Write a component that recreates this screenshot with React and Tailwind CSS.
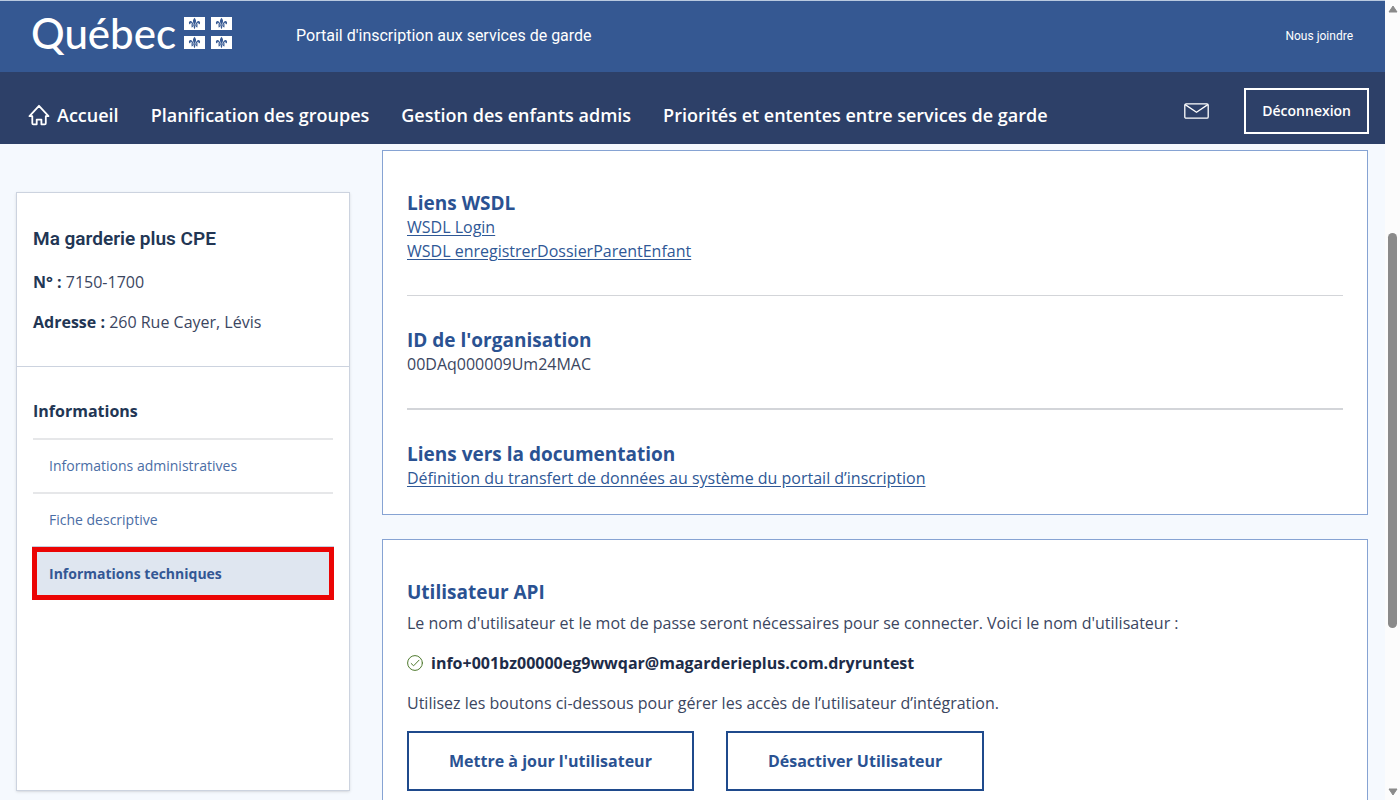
import React from "react";

function FleurDeLys() {
  return (
    <svg viewBox="0 0 21 13" className="h-[13px] w-[21px]" aria-hidden="true">
      <rect width="21" height="13" fill="#fff" />
      <g fill="#355892">
        <path d="M10.5 .8C11.6 2.2 12.2 3.2 12 4.6C11.9 5.6 11.3 6.4 11.2 7.6H9.8C9.7 6.4 9.1 5.6 9 4.6C8.8 3.2 9.4 2.2 10.5 .8Z" />
        <path d="M9.3 7.6C9 6 8.3 4 6.7 3.9C5.2 3.8 4.5 5.3 5.1 6.7C5.5 7.4 6.3 7.4 6.7 6.8C6.2 6.3 6.5 5.6 7 5.8C7.8 6.1 7.8 7 7.9 7.6Z" />
        <path d="M11.7 7.6C12 6 12.7 4 14.3 3.9C15.8 3.8 16.5 5.3 15.9 6.7C15.5 7.4 14.7 7.4 14.3 6.8C14.8 6.3 14.5 5.6 14 5.8C13.2 6.1 13.2 7 13.1 7.6Z" />
        <path d="M7.2 7.5H13.8V8.6H7.2Z" />
        <path d="M9.8 8.5H11.2C11.3 9.4 11.6 10.2 10.5 12.2C9.4 10.2 9.7 9.4 9.8 8.5Z" />
        <path d="M8.2 8.5H9.4C9.2 9.7 8.5 10.5 7.5 10.3C7 10 7.2 9.4 7.7 9.4C8 9.3 8.1 9 8.2 8.5ZM12.8 8.5H11.6C11.8 9.7 12.5 10.5 13.5 10.3C14 10 13.8 9.4 13.3 9.4C13 9.3 12.9 9 12.8 8.5Z" />
      </g>
    </svg>
  );
}

function Logo() {
  return (
    <a href="#quebec" className="flex h-14 items-start gap-2">
      <span className="font-['Lato',sans-serif] text-[42px] leading-[50px] font-medium">Québec</span>
      <span className="grid grid-cols-[21px_21px] gap-[6px] pt-[9px]">
        <FleurDeLys />
        <FleurDeLys />
        <FleurDeLys />
        <FleurDeLys />
      </span>
    </a>
  );
}

function HomeIcon() {
  return (
    <svg viewBox="0 0 22 22" className="h-[22px] w-[22px]" fill="none" stroke="currentColor" strokeWidth="1.8" strokeLinejoin="round" strokeLinecap="round" aria-hidden="true">
      <path d="M4.3 12.2H1.5L11 1.8L20.5 12.2H17.8V19.2Q17.8 20.3 16.7 20.3H13.4V15.6H8.7V20.3H5.4Q4.3 20.3 4.3 19.2Z" />
    </svg>
  );
}

function MailIcon() {
  return (
    <svg viewBox="0 0 25 16" className="h-4 w-[25px]" fill="none" stroke="currentColor" strokeWidth="1.3" strokeLinejoin="round" aria-hidden="true">
      <rect x=".8" y=".8" width="23.4" height="14.4" rx="1.3" />
      <path d="M1.2 1.6L12.5 9.3L23.8 1.6" />
    </svg>
  );
}

function CheckIcon() {
  return (
    <svg viewBox="0 0 16 16" className="h-4 w-4 text-[#4f7a2e]" fill="none" stroke="currentColor" strokeLinecap="round" strokeLinejoin="round" aria-hidden="true">
      <circle cx="8" cy="8" r="7.4" />
      <path d="M4.2 8.5L6.6 10.8L12 5.2" />
    </svg>
  );
}

const navLinks = [
  "Planification des groupes",
  "Gestion des enfants admis",
  "Priorités et ententes entre services de garde",
];

function Section({ title, children }) {
  return (
    <section>
      <h2 className="text-[19px] leading-6 font-bold text-[#2a5292]">{title}</h2>
      {children}
    </section>
  );
}

function TextLink({ children }) {
  return (
    <a href="#document" className="block text-[#2f5896] underline underline-offset-2">
      {children}
    </a>
  );
}

function ActionButton({ children }) {
  return (
    <button type="button" className="h-[60px] border-2 border-[#1f4a8c] bg-white px-10 font-bold text-[#2a5292]">
      {children}
    </button>
  );
}

function Sidebar() {
  return (
    <aside className="mt-12 mb-[9px] w-[334px] shrink-0 border border-[#ccd3df] bg-white shadow-sm">
      <div className="border-b border-[#ccd3df] px-4 pt-[31px] pb-8">
        <h2 className="font-['Roboto',sans-serif] text-[19px] leading-[30px] font-semibold">Ma garderie plus CPE</h2>
        <p className="mt-4 text-[#3b465f]">
          <b className="text-[#223654]">N° :</b> 7150-1700
        </p>
        <p className="mt-4 text-[#3b465f]">
          <b className="text-[#223654]">Adresse :</b> 260 Rue Cayer, Lévis
        </p>
      </div>
      <nav className="px-4 pt-8" aria-label="Informations">
        <h3 className="pb-[15px] font-bold">Informations</h3>
        <ul className="text-sm text-[#4a6da5]">
          <li className="border-t-2 border-[#e6e7e9]">
            <a href="#administratives" className="flex h-[52px] items-center px-4">Informations administratives</a>
          </li>
          <li className="border-t-2 border-[#e6e7e9]">
            <a href="#descriptive" className="flex h-[52px] items-center px-4">Fiche descriptive</a>
          </li>
          <li className="-mx-px border-t border-[#c5d0e0]">
            <a
              href="#techniques"
              aria-current="page"
              className="flex h-[53px] items-center border-5 border-[#eb0404] bg-[#dfe6f0] px-3 font-bold text-[#335794]"
            >
              Informations techniques
            </a>
          </li>
        </ul>
      </nav>
    </aside>
  );
}

function Scrollbar() {
  return (
    <div className="flex w-[15px] shrink-0 flex-col items-center bg-[#fcfcfc] pt-[5px] pb-1" aria-hidden="true">
      <svg viewBox="0 0 10 8" className="h-2 w-[10px]">
        <path d="M5 1L9 7H1Z" fill="#8a8a8a" stroke="#8a8a8a" strokeLinejoin="round" />
      </svg>
      <div className="flex w-full flex-1 flex-col items-center">
        <div className="grow-[220]" />
        <div className="w-[9px] grow-[396] rounded-full bg-[#8a8a8a]" />
        <div className="grow-[160]" />
      </div>
      <svg viewBox="0 0 10 8" className="h-2 w-[10px]">
        <path d="M5 7L9 1H1Z" fill="#8a8a8a" stroke="#8a8a8a" strokeLinejoin="round" />
      </svg>
    </div>
  );
}

export default function App() {
  return (
    <div className="flex h-screen overflow-hidden bg-[#f5f9fe] font-['Open_Sans',sans-serif] text-base leading-6 text-[#223654]">
      <div className="flex min-w-0 flex-1 flex-col">
        <header className="shrink-0 border-t border-[#b9c9df] text-white">
          <div className="flex h-[71px] items-center bg-[#355892] pr-8 pb-px pl-[31px] font-['Roboto',sans-serif]">
            <Logo />
            <span className="ml-16">Portail d'inscription aux services de garde</span>
            <a href="#joindre" className="ml-auto text-xs">Nous joindre</a>
          </div>
          <nav className="flex h-[72px] items-center bg-[#2d4068] pt-[6px] pr-4 pl-7 whitespace-nowrap" aria-label="Principale">
            <div className="flex items-center gap-8 pt-2 text-lg leading-6 font-semibold">
              <a href="#accueil" className="flex items-center gap-[7px]">
                <HomeIcon />
                Accueil
              </a>
              {navLinks.map((label) => (
                <a key={label} href="#menu">{label}</a>
              ))}
            </div>
            <a href="#messages" aria-label="Messages" className="ml-auto">
              <MailIcon />
            </a>
            <button type="button" className="ml-[35px] h-[46px] border-2 border-white px-4 text-sm font-semibold">
              Déconnexion
            </button>
          </nav>
        </header>

        <div className="flex min-h-0 flex-1 gap-8 overflow-hidden pr-[17px] pl-4">
          <Sidebar />
          <main className="flex min-w-0 flex-1 flex-col gap-6 pt-[6px] text-[#3b465f]">
            <div className="shrink-0 border border-[#86a3d3] bg-white px-6 pt-10 pb-6">
              <Section title="Liens WSDL">
                <TextLink>WSDL Login</TextLink>
                <TextLink>WSDL enregistrerDossierParentEnfant</TextLink>
              </Section>
              <hr className="my-8 border-[#d3d5d9]" />
              <Section title="ID de l'organisation">
                <p>00DAq000009Um24MAC</p>
              </Section>
              <hr className="my-8 border-t-2 border-[#d3d5d9]" />
              <Section title="Liens vers la documentation">
                <TextLink>Définition du transfert de données au système du portail d’inscription</TextLink>
              </Section>
            </div>

            <div className="shrink-0 border border-[#86a3d3] bg-white px-6 pt-10 pb-10">
              <Section title="Utilisateur API">
                <p className="mt-[7px]">
                  Le nom d'utilisateur et le mot de passe seront nécessaires pour se connecter. Voici le nom d'utilisateur :
                </p>
                <p className="mt-4 flex items-center gap-2 font-bold text-[#1d2c48]">
                  <CheckIcon />
                  info+001bz00000eg9wwqar@magarderieplus.com.dryruntest
                </p>
                <p className="mt-4">Utilisez les boutons ci-dessous pour gérer les accès de l’utilisateur d’intégration.</p>
                <div className="mt-4 flex gap-8">
                  <ActionButton>Mettre à jour l'utilisateur</ActionButton>
                  <ActionButton>Désactiver Utilisateur</ActionButton>
                </div>
              </Section>
            </div>
          </main>
        </div>
      </div>
      <Scrollbar />
    </div>
  );
}
